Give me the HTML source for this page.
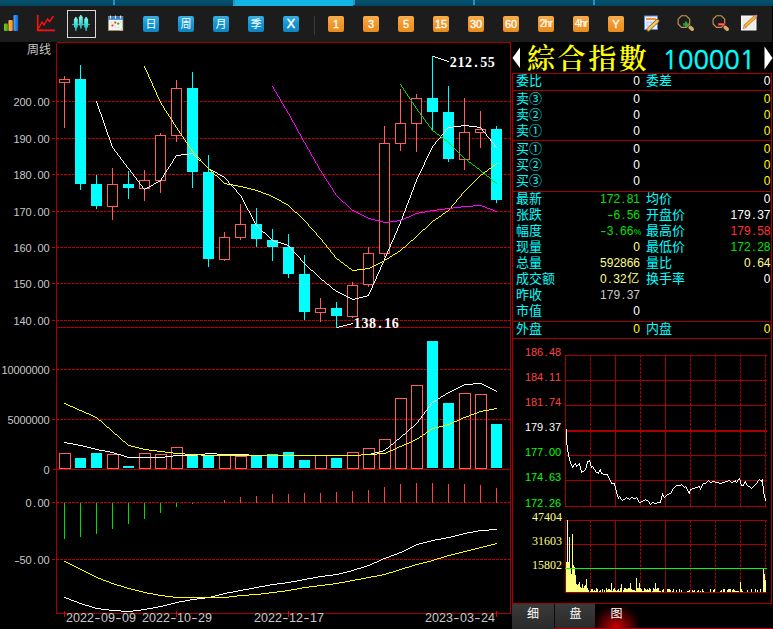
<!DOCTYPE html>
<html><head><meta charset="utf-8"><title>chart</title><style>
html,body{margin:0;padding:0;background:#000;}
#root{position:relative;width:773px;height:629px;overflow:hidden;background:#000;font-family:"Liberation Mono","Noto Sans CJK SC",monospace;}
.t{position:absolute;white-space:nowrap;line-height:14px;color:#fff;}
.t i{display:inline-block;font-style:normal;text-align:center;}
.ax{font-size:11px;color:#c8c8c8;font-family:"Liberation Sans",sans-serif;}
.num{font-size:11px;font-family:"Liberation Sans","Noto Sans CJK SC",sans-serif;}
.date{font-size:12.5px;color:#c8c8c8;font-family:"Liberation Sans",sans-serif;}
.cn{font-size:12px;font-family:"Liberation Sans","Noto Sans CJK SC",sans-serif;}
.cy{color:#00ffff;}
.pcn{font-size:13px;font-family:"Liberation Sans","Noto Sans CJK SC",sans-serif;}
.pn{font-size:12px;font-family:"Liberation Sans","Noto Sans CJK SC",sans-serif;}
.bold{font-family:"Liberation Serif",serif;font-weight:bold;font-size:14px;color:#fff;}
.ser{font-family:"Liberation Serif",serif;font-size:12px;color:#ffff80;}
.title{font-family:"Noto Serif CJK SC","Noto Serif CJK TC",serif;font-weight:600;font-size:28px;letter-spacing:2.6px;line-height:34px;color:#ffff00;}
.code{font-family:"NanumGothic","Liberation Sans",sans-serif;font-size:25.5px;-webkit-text-stroke:0.5px #00ffff;line-height:34px;color:#00ffff;}
#tb{position:absolute;left:0;top:0;width:772px;height:42px;background:#1c1c1c;}
#strip{position:absolute;left:0;top:0;width:773px;height:6px;background:linear-gradient(#06526f,#054560);}
#strip i{position:absolute;top:0;width:1.5px;height:5px;background:#2b8fc0;}
#strip b{position:absolute;top:0;left:233px;width:120px;height:5.5px;background:#11b5e6;}
.btn{position:absolute;top:16px;width:16px;height:16px;border-radius:2px;color:#fff;font:bold 11px/16px "Liberation Sans","Noto Sans CJK SC",sans-serif;text-align:center;overflow:hidden;}
.bl{font-weight:normal;font-size:11px;}
.bx{font-weight:normal;font-size:12.5px;-webkit-text-stroke:0.45px #fff;}
.bl{background:linear-gradient(#38aee2,#1496d2 50%,#0d84c2);}
.or{font-weight:normal;-webkit-text-stroke:0.3px #fff;background:linear-gradient(#f7ad4c,#f0962a 55%,#e88c1c);}
.sm{font-size:10px;letter-spacing:-0.6px;-webkit-text-stroke:0.2px #fff;}
#tabs{position:absolute;left:513px;top:604px;width:260px;height:25px;background:#000;}
#tabs div{position:absolute;top:0;height:25px;color:#fff;font:12px/21px "Liberation Sans","Noto Sans CJK SC",sans-serif;text-align:center;}
</style></head>
<body><div id="root">
<svg width="773" height="629" viewBox="0 0 773 629" style="position:absolute;left:0;top:0">
<g shape-rendering="crispEdges">
<line x1="56.5" y1="42.5" x2="56.5" y2="613.5" stroke="#a80000" stroke-width="1"/>
<line x1="510.5" y1="42.5" x2="510.5" y2="613.5" stroke="#a80000" stroke-width="1"/>
<line x1="56.5" y1="42.5" x2="510.5" y2="42.5" stroke="#a80000" stroke-width="1"/>
<line x1="56.5" y1="613.5" x2="510.5" y2="613.5" stroke="#a80000" stroke-width="1"/>
<line x1="56.5" y1="327.5" x2="510.5" y2="327.5" stroke="#a80000" stroke-width="1"/>
<line x1="53" y1="469.5" x2="510.5" y2="469.5" stroke="#a80000" stroke-width="1"/>
<line x1="52" y1="101.5" x2="510.5" y2="101.5" stroke="#c00000" stroke-width="1" stroke-dasharray="3 1"/>
<line x1="52" y1="138.5" x2="510.5" y2="138.5" stroke="#c00000" stroke-width="1" stroke-dasharray="3 1"/>
<line x1="52" y1="174.5" x2="510.5" y2="174.5" stroke="#c00000" stroke-width="1" stroke-dasharray="3 1"/>
<line x1="52" y1="211.5" x2="510.5" y2="211.5" stroke="#c00000" stroke-width="1" stroke-dasharray="3 1"/>
<line x1="52" y1="247.5" x2="510.5" y2="247.5" stroke="#c00000" stroke-width="1" stroke-dasharray="3 1"/>
<line x1="52" y1="283.5" x2="510.5" y2="283.5" stroke="#c00000" stroke-width="1" stroke-dasharray="3 1"/>
<line x1="52" y1="320.5" x2="510.5" y2="320.5" stroke="#c00000" stroke-width="1" stroke-dasharray="3 1"/>
<line x1="52" y1="369.5" x2="510.5" y2="369.5" stroke="#c00000" stroke-width="1" stroke-dasharray="3 1"/>
<line x1="52" y1="419.5" x2="510.5" y2="419.5" stroke="#c00000" stroke-width="1" stroke-dasharray="3 1"/>
<line x1="52" y1="502.5" x2="510.5" y2="502.5" stroke="#c00000" stroke-width="1" stroke-dasharray="3 1"/>
<line x1="52" y1="559.5" x2="510.5" y2="559.5" stroke="#c00000" stroke-width="1" stroke-dasharray="3 1"/>
<line x1="64.5" y1="611" x2="64.5" y2="617" stroke="#e00000" stroke-width="1"/>
<line x1="176.5" y1="611" x2="176.5" y2="617" stroke="#e00000" stroke-width="1"/>
<line x1="288.5" y1="611" x2="288.5" y2="617" stroke="#e00000" stroke-width="1"/>
<line x1="496.5" y1="611" x2="496.5" y2="617" stroke="#e00000" stroke-width="1"/>
<line x1="64.5" y1="76" x2="64.5" y2="79" stroke="#ff5c5c" stroke-width="1"/>
<line x1="64.5" y1="82" x2="64.5" y2="128" stroke="#ff5c5c" stroke-width="1"/>
<rect x="59.5" y="79.5" width="10" height="3" fill="#000" stroke="#ff5c5c"/>
<line x1="80.5" y1="65" x2="80.5" y2="190" stroke="#00ffff" stroke-width="1"/>
<rect x="75" y="79" width="11" height="105" fill="#00ffff"/>
<line x1="96.5" y1="175" x2="96.5" y2="209" stroke="#00ffff" stroke-width="1"/>
<rect x="91" y="184" width="11" height="22" fill="#00ffff"/>
<line x1="112.5" y1="168" x2="112.5" y2="184" stroke="#ff5c5c" stroke-width="1"/>
<line x1="112.5" y1="206" x2="112.5" y2="220" stroke="#ff5c5c" stroke-width="1"/>
<rect x="107.5" y="184.5" width="10" height="22" fill="#000" stroke="#ff5c5c"/>
<line x1="128.5" y1="171" x2="128.5" y2="199" stroke="#00ffff" stroke-width="1"/>
<rect x="123" y="184" width="11" height="4" fill="#00ffff"/>
<line x1="144.5" y1="170" x2="144.5" y2="180" stroke="#ff5c5c" stroke-width="1"/>
<line x1="144.5" y1="188" x2="144.5" y2="201" stroke="#ff5c5c" stroke-width="1"/>
<rect x="139.5" y="180.5" width="10" height="8" fill="#000" stroke="#ff5c5c"/>
<line x1="160.5" y1="133" x2="160.5" y2="135" stroke="#ff5c5c" stroke-width="1"/>
<line x1="160.5" y1="180" x2="160.5" y2="193" stroke="#ff5c5c" stroke-width="1"/>
<rect x="155.5" y="135.5" width="10" height="45" fill="#000" stroke="#ff5c5c"/>
<line x1="176.5" y1="80" x2="176.5" y2="88" stroke="#ff5c5c" stroke-width="1"/>
<line x1="176.5" y1="135" x2="176.5" y2="142" stroke="#ff5c5c" stroke-width="1"/>
<rect x="171.5" y="88.5" width="10" height="47" fill="#000" stroke="#ff5c5c"/>
<line x1="192.5" y1="72" x2="192.5" y2="188" stroke="#00ffff" stroke-width="1"/>
<rect x="187" y="88" width="11" height="84" fill="#00ffff"/>
<line x1="208.5" y1="155" x2="208.5" y2="267" stroke="#00ffff" stroke-width="1"/>
<rect x="203" y="172" width="11" height="87" fill="#00ffff"/>
<line x1="224.5" y1="232" x2="224.5" y2="237" stroke="#ff5c5c" stroke-width="1"/>
<line x1="224.5" y1="259" x2="224.5" y2="261" stroke="#ff5c5c" stroke-width="1"/>
<rect x="219.5" y="237.5" width="10" height="22" fill="#000" stroke="#ff5c5c"/>
<line x1="240.5" y1="204" x2="240.5" y2="224" stroke="#ff5c5c" stroke-width="1"/>
<line x1="240.5" y1="237" x2="240.5" y2="240" stroke="#ff5c5c" stroke-width="1"/>
<rect x="235.5" y="224.5" width="10" height="13" fill="#000" stroke="#ff5c5c"/>
<line x1="256.5" y1="208" x2="256.5" y2="247" stroke="#00ffff" stroke-width="1"/>
<rect x="251" y="224" width="11" height="15" fill="#00ffff"/>
<line x1="272.5" y1="229" x2="272.5" y2="261" stroke="#00ffff" stroke-width="1"/>
<rect x="267" y="240" width="11" height="7" fill="#00ffff"/>
<line x1="288.5" y1="234" x2="288.5" y2="278" stroke="#00ffff" stroke-width="1"/>
<rect x="283" y="247" width="11" height="27" fill="#00ffff"/>
<line x1="304.5" y1="255" x2="304.5" y2="320" stroke="#00ffff" stroke-width="1"/>
<rect x="299" y="274" width="11" height="38" fill="#00ffff"/>
<line x1="320.5" y1="298" x2="320.5" y2="308" stroke="#ff5c5c" stroke-width="1"/>
<line x1="320.5" y1="312" x2="320.5" y2="322" stroke="#ff5c5c" stroke-width="1"/>
<rect x="315.5" y="308.5" width="10" height="4" fill="#000" stroke="#ff5c5c"/>
<line x1="336.5" y1="302" x2="336.5" y2="328" stroke="#00ffff" stroke-width="1"/>
<rect x="331" y="308" width="11" height="8" fill="#00ffff"/>
<line x1="352.5" y1="282" x2="352.5" y2="285" stroke="#ff5c5c" stroke-width="1"/>
<line x1="352.5" y1="316" x2="352.5" y2="318" stroke="#ff5c5c" stroke-width="1"/>
<rect x="347.5" y="285.5" width="10" height="31" fill="#000" stroke="#ff5c5c"/>
<line x1="368.5" y1="247" x2="368.5" y2="253" stroke="#ff5c5c" stroke-width="1"/>
<line x1="368.5" y1="284" x2="368.5" y2="287" stroke="#ff5c5c" stroke-width="1"/>
<rect x="363.5" y="253.5" width="10" height="31" fill="#000" stroke="#ff5c5c"/>
<line x1="384.5" y1="126" x2="384.5" y2="143" stroke="#ff5c5c" stroke-width="1"/>
<line x1="384.5" y1="253" x2="384.5" y2="257" stroke="#ff5c5c" stroke-width="1"/>
<rect x="379.5" y="143.5" width="10" height="110" fill="#000" stroke="#ff5c5c"/>
<line x1="400.5" y1="89" x2="400.5" y2="123" stroke="#ff5c5c" stroke-width="1"/>
<line x1="400.5" y1="143" x2="400.5" y2="151" stroke="#ff5c5c" stroke-width="1"/>
<rect x="395.5" y="123.5" width="10" height="20" fill="#000" stroke="#ff5c5c"/>
<line x1="416.5" y1="94" x2="416.5" y2="98" stroke="#ff5c5c" stroke-width="1"/>
<line x1="416.5" y1="123" x2="416.5" y2="152" stroke="#ff5c5c" stroke-width="1"/>
<rect x="411.5" y="98.5" width="10" height="25" fill="#000" stroke="#ff5c5c"/>
<line x1="432.5" y1="56" x2="432.5" y2="131" stroke="#00ffff" stroke-width="1"/>
<rect x="427" y="98" width="11" height="14" fill="#00ffff"/>
<line x1="448.5" y1="86" x2="448.5" y2="162" stroke="#00ffff" stroke-width="1"/>
<rect x="443" y="112" width="11" height="47" fill="#00ffff"/>
<line x1="464.5" y1="98" x2="464.5" y2="132" stroke="#ff5c5c" stroke-width="1"/>
<line x1="464.5" y1="159" x2="464.5" y2="170" stroke="#ff5c5c" stroke-width="1"/>
<rect x="459.5" y="132.5" width="10" height="27" fill="#000" stroke="#ff5c5c"/>
<line x1="480.5" y1="111" x2="480.5" y2="129" stroke="#ff5c5c" stroke-width="1"/>
<line x1="480.5" y1="132" x2="480.5" y2="148" stroke="#ff5c5c" stroke-width="1"/>
<rect x="475.5" y="129.5" width="10" height="3" fill="#000" stroke="#ff5c5c"/>
<line x1="496.5" y1="126" x2="496.5" y2="203" stroke="#00ffff" stroke-width="1"/>
<rect x="491" y="129" width="11" height="71" fill="#00ffff"/>
<rect x="59.5" y="453.5" width="11" height="15" fill="none" stroke="#ff5c5c"/>
<rect x="75" y="458" width="11" height="10" fill="#00ffff"/>
<rect x="91" y="453" width="11" height="15" fill="#00ffff"/>
<rect x="107.5" y="454.5" width="11" height="14" fill="none" stroke="#ff5c5c"/>
<rect x="123" y="466" width="11" height="2" fill="#00ffff"/>
<rect x="139.5" y="453.5" width="11" height="15" fill="none" stroke="#ff5c5c"/>
<rect x="155.5" y="454.5" width="11" height="14" fill="none" stroke="#ff5c5c"/>
<rect x="171.5" y="447.5" width="11" height="21" fill="none" stroke="#ff5c5c"/>
<rect x="187" y="454" width="11" height="14" fill="#00ffff"/>
<rect x="203" y="455" width="11" height="13" fill="#00ffff"/>
<rect x="219.5" y="455.5" width="11" height="13" fill="none" stroke="#ff5c5c"/>
<rect x="235.5" y="456.5" width="11" height="12" fill="none" stroke="#ff5c5c"/>
<rect x="251" y="456" width="11" height="12" fill="#00ffff"/>
<rect x="267" y="454" width="11" height="14" fill="#00ffff"/>
<rect x="283" y="452" width="11" height="16" fill="#00ffff"/>
<rect x="299" y="460" width="11" height="8" fill="#00ffff"/>
<rect x="315.5" y="455.5" width="11" height="13" fill="none" stroke="#ff5c5c"/>
<rect x="331" y="458" width="11" height="10" fill="#00ffff"/>
<rect x="347.5" y="452.5" width="11" height="16" fill="none" stroke="#ff5c5c"/>
<rect x="363.5" y="448.5" width="11" height="20" fill="none" stroke="#ff5c5c"/>
<rect x="379.5" y="439.5" width="11" height="29" fill="none" stroke="#ff5c5c"/>
<rect x="395.5" y="398.5" width="11" height="70" fill="none" stroke="#ff5c5c"/>
<rect x="411.5" y="385.5" width="11" height="83" fill="none" stroke="#ff5c5c"/>
<rect x="427" y="341" width="11" height="127" fill="#00ffff"/>
<rect x="443" y="403" width="11" height="65" fill="#00ffff"/>
<rect x="459.5" y="393.5" width="11" height="75" fill="none" stroke="#ff5c5c"/>
<rect x="475.5" y="394.5" width="11" height="74" fill="none" stroke="#ff5c5c"/>
<rect x="491" y="424" width="11" height="44" fill="#00ffff"/>
<line x1="64.5" y1="502.5" x2="64.5" y2="539" stroke="#00e000" stroke-width="1"/>
<line x1="80.5" y1="502.5" x2="80.5" y2="537" stroke="#00e000" stroke-width="1"/>
<line x1="96.5" y1="502.5" x2="96.5" y2="534" stroke="#00e000" stroke-width="1"/>
<line x1="112.5" y1="502.5" x2="112.5" y2="529" stroke="#00e000" stroke-width="1"/>
<line x1="128.5" y1="502.5" x2="128.5" y2="524" stroke="#00e000" stroke-width="1"/>
<line x1="144.5" y1="502.5" x2="144.5" y2="519" stroke="#00e000" stroke-width="1"/>
<line x1="160.5" y1="502.5" x2="160.5" y2="512.75" stroke="#00e000" stroke-width="1"/>
<line x1="176.5" y1="502.5" x2="176.5" y2="507" stroke="#00e000" stroke-width="1"/>
<line x1="192.5" y1="502.5" x2="192.5" y2="503.75" stroke="#00e000" stroke-width="1"/>
<line x1="224.5" y1="502.5" x2="224.5" y2="500.25" stroke="#ff4040" stroke-width="1"/>
<line x1="240.5" y1="502.5" x2="240.5" y2="497" stroke="#ff4040" stroke-width="1"/>
<line x1="256.5" y1="502.5" x2="256.5" y2="496" stroke="#ff4040" stroke-width="1"/>
<line x1="272.5" y1="502.5" x2="272.5" y2="494" stroke="#ff4040" stroke-width="1"/>
<line x1="288.5" y1="502.5" x2="288.5" y2="494" stroke="#ff4040" stroke-width="1"/>
<line x1="304.5" y1="502.5" x2="304.5" y2="493" stroke="#ff4040" stroke-width="1"/>
<line x1="320.5" y1="502.5" x2="320.5" y2="493" stroke="#ff4040" stroke-width="1"/>
<line x1="336.5" y1="502.5" x2="336.5" y2="492" stroke="#ff4040" stroke-width="1"/>
<line x1="352.5" y1="502.5" x2="352.5" y2="490.75" stroke="#ff4040" stroke-width="1"/>
<line x1="368.5" y1="502.5" x2="368.5" y2="490" stroke="#ff4040" stroke-width="1"/>
<line x1="384.5" y1="502.5" x2="384.5" y2="487" stroke="#ff4040" stroke-width="1"/>
<line x1="400.5" y1="502.5" x2="400.5" y2="483.75" stroke="#ff4040" stroke-width="1"/>
<line x1="416.5" y1="502.5" x2="416.5" y2="482.75" stroke="#ff4040" stroke-width="1"/>
<line x1="432.5" y1="502.5" x2="432.5" y2="482.75" stroke="#ff4040" stroke-width="1"/>
<line x1="448.5" y1="502.5" x2="448.5" y2="483.75" stroke="#ff4040" stroke-width="1"/>
<line x1="464.5" y1="502.5" x2="464.5" y2="483.75" stroke="#ff4040" stroke-width="1"/>
<line x1="480.5" y1="502.5" x2="480.5" y2="485" stroke="#ff4040" stroke-width="1"/>
<line x1="496.5" y1="502.5" x2="496.5" y2="487.75" stroke="#ff4040" stroke-width="1"/>
</g>
<path d="M453 126.5h8M469 126.5h8M145 188.5h2M176 155.5h5M277 242.5h4M209 169.5h2M181 154.5h8M218 174.5h2M211 170.5h2M344 295.5h2M367 295.5h2M348 297.5h2M359 297.5h4M448 127.5h5M477 127.5h4M333 289.5h2M274 241.5h3M158 181.5h2M322 280.5h2M340 293.5h2M311 270.5h2M281 243.5h3M147 187.5h2M284 244.5h3M336 291.5h2M213 171.5h2M461 125.5h8M199 160.5h2M189 153.5h4M215 172.5h2M149 186.5h2M287 245.5h2M154 183.5h2M272 240.5h2M156 182.5h2M350 298.5h2M355 298.5h4M151 185.5h2M327 284.5h2M346 296.5h2M363 296.5h4M220 175.5h2M352 299.5h3M338 292.5h2M342 294.5h2M222 176.5h2M263 232.5h2M105.5 126v3M140.5 184v1M153.5 184v1M230.5 184v1M414.5 184v3M143.5 188v1M234.5 188v1M413.5 187v3M118.5 155v1M194.5 155v1M428.5 154v2M330.5 286v1M372.5 285v3M391.5 242v2M270.5 238v1M393.5 238v2M99.5 109v3M301.5 260v1M384.5 258v3M129.5 169v1M167.5 169v1M421.5 169v2M117.5 153v2M193.5 154v1M133.5 174v2M164.5 173v2M419.5 173v2M130.5 170v2M166.5 170v2M271.5 239v1M254.5 221v2M400.5 221v3M304.5 263v1M382.5 263v2M110.5 140v3M436.5 141v1M491.5 141v1M245.5 204v2M407.5 203v2M371.5 288v2M103.5 120v3M308.5 267v1M380.5 267v3M392.5 240v2M138.5 181v1M228.5 181v2M416.5 179v3M241.5 196v2M410.5 195v3M289.5 246v1M390.5 244v3M375.5 279v2M369.5 292v2M125.5 164v1M170.5 164v2M204.5 164v1M424.5 162v3M379.5 270v2M236.5 190v2M412.5 190v2M142.5 186v2M233.5 187v1M296.5 254v1M386.5 254v2M136.5 178v2M161.5 178v2M226.5 179v1M297.5 255v1M370.5 290v2M437.5 140v1M490.5 139v2M108.5 135v2M440.5 136v2M487.5 136v1M420.5 171v2M116.5 152v1M429.5 152v2M106.5 129v3M446.5 129v1M482.5 129v2M251.5 215v2M403.5 213v3M259.5 228v1M397.5 228v3M300.5 258v2M104.5 123v3M122.5 160v1M173.5 159v2M425.5 160v2M131.5 172v1M165.5 172v1M120.5 157v2M174.5 158v1M197.5 158v1M426.5 158v2M112.5 146v2M432.5 146v2M495.5 146v1M435.5 142v2M492.5 142v1M315.5 273v1M378.5 272v2M441.5 135v1M486.5 134v2M293.5 251v1M387.5 251v3M232.5 186v1M244.5 202v2M408.5 200v3M256.5 225v1M399.5 224v2M102.5 117v3M250.5 213v2M139.5 182v2M229.5 183v1M415.5 182v2M332.5 288v1M303.5 262v1M383.5 261v2M127.5 167v1M168.5 167v2M207.5 167v1M422.5 167v2M111.5 143v3M493.5 143v1M107.5 132v3M443.5 133v1M485.5 133v1M114.5 149v2M431.5 148v2M137.5 180v1M160.5 180v1M227.5 180v1M175.5 156v2M196.5 157v1M427.5 156v2M239.5 194v1M411.5 192v3M119.5 156v1M195.5 156v1M109.5 137v3M438.5 139v1M240.5 195v1M243.5 200v2M101.5 114v3M314.5 272v1M255.5 223v2M121.5 159v1M198.5 159v1M265.5 233v1M395.5 233v2M447.5 128v1M481.5 128v1M266.5 234v1M113.5 148v1M98.5 106v3M126.5 165v2M169.5 166v1M206.5 166v1M423.5 165v2M258.5 227v1M398.5 226v2M123.5 161v2M172.5 161v2M202.5 162v1M238.5 193v1M317.5 275v1M377.5 274v2M306.5 265v1M381.5 265v2M298.5 256v1M385.5 256v2M135.5 177v1M162.5 177v1M224.5 177v1M417.5 177v2M141.5 185v1M231.5 185v1M496.5 147v1M225.5 178v1M144.5 189v1M235.5 189v1M335.5 290v1M97.5 103v3M373.5 283v2M305.5 264v1M444.5 132v1M484.5 132v1M299.5 257v1M261.5 230v1M257.5 226v1M237.5 192v1M163.5 175v2M418.5 175v2M115.5 151v1M430.5 150v2M439.5 138v1M489.5 138v1M442.5 134v1M434.5 144v1M494.5 144v2M291.5 248v1M389.5 247v2M246.5 206v2M406.5 205v3M324.5 281v1M374.5 281v2M132.5 173v1M217.5 173v1M316.5 274v1M201.5 161v1M242.5 198v2M409.5 198v2M320.5 278v1M376.5 276v3M290.5 247v1M445.5 130v2M368.5 294v1M128.5 168v1M208.5 168v1M307.5 266v1M329.5 285v1M260.5 229v1M268.5 236v1M394.5 235v3M253.5 219v2M401.5 219v2M248.5 210v1M405.5 208v3M319.5 277v1M134.5 176v1M100.5 112v2M267.5 235v1M96.5 101v2M396.5 231v2M302.5 261v1M433.5 145v1M318.5 276v1M292.5 249v2M388.5 249v2M124.5 163v1M171.5 163v1M203.5 163v1M252.5 217v2M402.5 216v3M249.5 211v2M404.5 211v2M310.5 269v1M262.5 231v1M483.5 131v1M321.5 279v1M295.5 253v1M488.5 137v1M325.5 282v1M205.5 165v1M313.5 271v1M269.5 237v1M294.5 252v1M247.5 208v2M331.5 287v1M309.5 268v1M326.5 283v1" fill="none" stroke="#ffffff" stroke-width="1" shape-rendering="crispEdges"/>
<path d="M227 184.5h6M481 174.5h2M357 269.5h8M433 220.5h2M238 186.5h5M251 189.5h4M233 185.5h5M286 204.5h2M255 190.5h3M341 262.5h2M380 262.5h2M411 240.5h2M352 270.5h5M269 195.5h2M282 202.5h2M485 171.5h2M376 264.5h2M398 251.5h2M390 256.5h2M215 175.5h2M337 259.5h2M385 259.5h2M446 211.5h2M423 229.5h2M263 193.5h3M349 268.5h2M365 268.5h5M489 168.5h2M258 191.5h3M273 197.5h2M295 212.5h2M378 263.5h2M266 194.5h3M443 213.5h2M370 267.5h2M277 199.5h2M271 196.5h2M243 187.5h4M224 183.5h3M279 200.5h2M345 265.5h2M374 265.5h2M403 247.5h2M436 218.5h2M372 266.5h2M247 188.5h4M395 253.5h2M261 192.5h2M275 198.5h2M493 165.5h2M382 261.5h2M439 216.5h2M387 258.5h2M393 254.5h2M284 203.5h2M189.5 146v2M471.5 184v1M334.5 255v2M392.5 255v1M290.5 207v1M451.5 206v2M339.5 260v1M384.5 260v1M214.5 174v1M351.5 269v1M304.5 220v1M149.5 77v2M469.5 186v1M301.5 217v1M438.5 217v1M150.5 79v2M163.5 106v2M219.5 178v1M477.5 178v1M466.5 189v1M298.5 214v1M442.5 214v1M470.5 185v1M453.5 204v1M175.5 125v2M156.5 92v3M193.5 152v1M465.5 190v1M319.5 237v1M415.5 237v1M157.5 95v2M322.5 240v2M320.5 238v1M414.5 238v1M461.5 194v2M455.5 202v1M200.5 159v2M211.5 171v1M326.5 245v2M406.5 245v1M344.5 264v1M330.5 250v2M480.5 175v1M328.5 248v1M402.5 248v1M167.5 113v1M170.5 117v2M207.5 167v1M491.5 167v1M294.5 211v1M312.5 229v1M171.5 119v1M462.5 193v1M192.5 151v1M316.5 233v2M418.5 234v1M208.5 168v1M464.5 191v1M199.5 158v1M311.5 228v1M425.5 228v1M323.5 242v1M409.5 242v1M459.5 197v1M293.5 210v1M448.5 210v1M173.5 122v2M210.5 170v1M487.5 170v1M445.5 212v1M343.5 263v1M220.5 179v1M476.5 179v1M166.5 111v2M174.5 124v1M297.5 213v1M177.5 128v2M348.5 267v1M159.5 99v2M457.5 199v1M191.5 149v2M303.5 219v1M435.5 219v1M460.5 196v1M308.5 224v2M429.5 224v1M168.5 114v2M468.5 187v1M472.5 183v1M329.5 249v1M401.5 249v1M321.5 239v1M413.5 239v1M148.5 74v3M400.5 250v1M456.5 200v2M204.5 164v1M495.5 164v1M181.5 134v2M145.5 68v2M158.5 97v2M327.5 247v1M410.5 241v1M292.5 209v1M449.5 209v1M302.5 218v1M202.5 162v1M315.5 232v1M420.5 232v1M347.5 266v1M467.5 188v1M147.5 72v2M317.5 235v1M417.5 235v1M172.5 120v2M221.5 180v1M475.5 180v1M314.5 231v1M421.5 231v1M289.5 206v1M144.5 66v2M194.5 153v1M155.5 90v2M218.5 177v1M478.5 177v1M195.5 154v1M331.5 252v1M397.5 252v1M201.5 161v1M332.5 253v1M306.5 222v1M431.5 222v1M176.5 127v1M179.5 131v2M299.5 215v1M441.5 215v1M180.5 133v1M209.5 169v1M488.5 169v1M154.5 88v2M324.5 243v1M408.5 243v1M335.5 257v1M389.5 257v1M291.5 208v1M450.5 208v1M463.5 192v1M313.5 230v1M422.5 230v1M223.5 182v1M473.5 182v1M146.5 70v2M183.5 137v2M458.5 198v1M205.5 165v1M153.5 86v2M305.5 221v1M432.5 221v1M419.5 233v1M340.5 261v1M178.5 130v1M182.5 136v1M300.5 216v1M222.5 181v1M474.5 181v1M310.5 227v1M426.5 227v1M197.5 156v1M203.5 163v1M496.5 163v1M336.5 258v1M164.5 108v2M185.5 140v2M186.5 142v1M152.5 83v3M196.5 155v1M428.5 225v1M333.5 254v1M212.5 172v1M484.5 172v1M206.5 166v1M492.5 166v1M405.5 246v1M288.5 205v1M452.5 205v1M307.5 223v1M430.5 223v1M184.5 139v1M281.5 201v1M151.5 81v2M454.5 203v1M217.5 176v1M479.5 176v1M187.5 143v2M188.5 145v1M325.5 244v1M407.5 244v1M198.5 157v1M318.5 236v1M416.5 236v1M161.5 103v2M213.5 173v1M483.5 173v1M162.5 105v1M165.5 110v1M160.5 101v2M169.5 116v1M190.5 148v1M309.5 226v1M427.5 226v1" fill="none" stroke="#ffff00" stroke-width="1" shape-rendering="crispEdges"/>
<path d="M437 209.5h8M490 209.5h3M371 219.5h4M402 219.5h2M383 222.5h6M366 217.5h2M406 217.5h3M356 212.5h2M419 212.5h6M453 207.5h8M485 207.5h2M368 218.5h3M404 218.5h2M354 211.5h2M425 211.5h5M495 211.5h2M364 216.5h2M409 216.5h2M375 220.5h4M397 220.5h5M461 206.5h12M482 206.5h3M358 213.5h2M415 213.5h4M445 208.5h8M487 208.5h3M473 205.5h9M360 214.5h2M413 214.5h2M352 210.5h2M430 210.5h7M493 210.5h2M379 221.5h4M389 221.5h8M343 202.5h2M362 215.5h2M411 215.5h2M351.5 209v1M289.5 114v2M277.5 94v2M304.5 142v1M349.5 207v1M307.5 147v2M335.5 193v2M274.5 89v2M309.5 150v2M297.5 129v2M300.5 134v2M348.5 206v1M350.5 208v1M347.5 205v1M305.5 143v2M319.5 168v2M342.5 201v1M294.5 123v2M320.5 170v1M287.5 111v2M325.5 178v1M313.5 157v2M280.5 99v2M302.5 138v2M291.5 118v2M318.5 166v2M329.5 184v1M288.5 113v1M284.5 106v2M310.5 152v2M298.5 131v2M273.5 87v2M326.5 179v2M334.5 192v1M303.5 140v2M296.5 127v2M301.5 136v2M345.5 203v1M315.5 161v2M323.5 174v2M311.5 154v2M290.5 116v2M314.5 159v2M293.5 122v1M281.5 101v2M328.5 182v2M316.5 163v1M283.5 104v2M327.5 181v1M286.5 109v2M321.5 171v2M276.5 92v2M324.5 176v2M312.5 156v1M332.5 188v2M279.5 97v2M317.5 164v2M272.5 86v1M306.5 145v2M330.5 185v2M333.5 190v2M299.5 133v1M292.5 120v2M295.5 125v2M346.5 204v1M339.5 198v1M285.5 108v1M282.5 103v1M278.5 96v1M308.5 149v1M275.5 91v1M331.5 187v1M340.5 199v1M336.5 195v1M341.5 200v1M337.5 196v1M338.5 197v1M322.5 173v1" fill="none" stroke="#ff00ff" stroke-width="1" shape-rendering="crispEdges"/>
<path d="M441 137.5h2M437 134.5h2M465 159.5h2M473 165.5h2M469 162.5h2M433 131.5h2M477 168.5h2M445 140.5h2M482 172.5h2M487 176.5h2M493 181.5h2M413.5 103v2M422.5 116v1M484.5 173v1M459.5 153v1M409.5 97v2M455.5 149v1M417.5 109v2M426.5 122v1M443.5 138v1M427.5 123v1M401.5 85v2M414.5 105v1M444.5 139v1M485.5 174v1M431.5 128v2M406.5 93v1M462.5 156v1M411.5 100v2M420.5 113v2M463.5 157v1M423.5 117v2M407.5 94v2M415.5 106v2M424.5 119v1M481.5 171v1M412.5 102v1M495.5 182v1M464.5 158v1M440.5 136v1M460.5 154v1M496.5 183v1M416.5 108v1M471.5 163v1M418.5 111v1M400.5 84v1M472.5 164v1M448.5 142v1M405.5 91v2M479.5 169v1M490.5 178v1M432.5 130v1M449.5 143v1M410.5 99v1M480.5 170v1M492.5 180v1M425.5 120v2M428.5 124v2M403.5 88v2M452.5 146v1M429.5 126v1M447.5 141v1M475.5 166v1M453.5 147v1M404.5 90v1M421.5 115v1M435.5 132v1M430.5 127v1M491.5 179v1M436.5 133v1M454.5 148v1M439.5 135v1M450.5 144v1M467.5 160v1M456.5 150v1M451.5 145v1M468.5 161v1M486.5 175v1M461.5 155v1M402.5 87v1M489.5 177v1M457.5 151v1M419.5 112v1M458.5 152v1M476.5 167v1M408.5 96v1" fill="none" stroke="#00e000" stroke-width="1" shape-rendering="crispEdges"/>
<path d="M114 453.5h3M205 453.5h12M371 453.5h4M121 455.5h3M173 455.5h24M249 455.5h112M117 454.5h4M197 454.5h8M217 454.5h32M361 454.5h10M124 456.5h3M165 456.5h8M95 449.5h4M105 451.5h5M379 451.5h4M443 395.5h2M78 445.5h5M127 457.5h38M435 400.5h2M448 392.5h2M110 452.5h4M375 452.5h4M83 446.5h4M403 434.5h2M473 383.5h9M67 443.5h6M99 450.5h6M383 450.5h2M464 384.5h9M482 384.5h2M462 385.5h2M484 385.5h2M460 386.5h2M486 386.5h2M458 387.5h2M488 387.5h2M64 442.5h3M441 396.5h2M454 389.5h2M492 389.5h2M411 427.5h2M87 447.5h4M73 444.5h5M391 444.5h2M446 393.5h2M438 398.5h2M91 448.5h4M386 448.5h2M450 391.5h2M456 388.5h2M490 388.5h2M452 390.5h2M494 390.5h2M397 439.5h2M433 401.5h2M418.5 420v2M421.5 416v2M385.5 449v1M390.5 445v1M413.5 426v1M440.5 397v1M429.5 406v1M389.5 446v1M424.5 412v2M393.5 443v1M432.5 402v1M420.5 418v1M423.5 414v1M394.5 442v1M415.5 424v1M408.5 430v1M395.5 441v1M388.5 447v1M496.5 391v1M431.5 403v1M399.5 438v1M426.5 410v1M410.5 428v1M417.5 422v1M445.5 394v1M414.5 425v1M422.5 415v1M437.5 399v1M401.5 436v1M405.5 433v1M425.5 411v1M428.5 407v1M416.5 423v1M419.5 419v1M407.5 431v1M427.5 408v2M396.5 440v1M400.5 437v1M430.5 404v2M402.5 435v1M409.5 429v1M406.5 432v1" fill="none" stroke="#ffffff" stroke-width="1" shape-rendering="crispEdges"/>
<path d="M430 429.5h2M75 408.5h2M494 408.5h3M201 455.5h160M409 442.5h2M447 424.5h3M157 451.5h8M388 451.5h2M185 454.5h16M361 454.5h16M165 452.5h8M386 452.5h2M79 410.5h3M483 410.5h6M139 448.5h4M395 448.5h2M70 406.5h3M173 453.5h12M377 453.5h9M107 427.5h2M435 427.5h4M93 416.5h2M466 416.5h3M77 409.5h2M489 409.5h5M86 413.5h3M474 413.5h3M432 428.5h3M89 414.5h2M471 414.5h3M404 444.5h2M115 434.5h2M423 434.5h2M82 411.5h2M479 411.5h4M143 449.5h6M393 449.5h2M454 421.5h3M149 450.5h8M390 450.5h3M95 417.5h2M463 417.5h3M415 439.5h2M131 446.5h4M399 446.5h3M91 415.5h2M469 415.5h2M443 425.5h4M406 443.5h3M450 423.5h2M128 445.5h3M402 445.5h2M420 436.5h2M123 441.5h2M411 441.5h2M461 418.5h2M84 412.5h2M477 412.5h2M413 440.5h2M135 447.5h4M397 447.5h2M99 420.5h2M457 420.5h2M439 426.5h4M73 407.5h2M417 438.5h2M66 404.5h2M452 422.5h2M68 405.5h2M64 403.5h2M459 419.5h2M427 431.5h2M110.5 429v1M125.5 442v1M104.5 424v1M109.5 428v1M127.5 444v1M101.5 421v1M121.5 439v1M105.5 425v1M126.5 443v1M103.5 423v1M118.5 436v1M97.5 418v1M122.5 440v1M111.5 430v1M429.5 430v1M106.5 426v1M120.5 438v1M117.5 435v1M422.5 435v1M102.5 422v1M113.5 432v1M426.5 432v1M98.5 419v1M112.5 431v1M119.5 437v1M419.5 437v1M114.5 433v1M425.5 433v1" fill="none" stroke="#ffff00" stroke-width="1" shape-rendering="crispEdges"/>
<path d="M419 543.5h4M74 601.5h3M179 601.5h6M391 555.5h3M121 611.5h12M467 532.5h6M66 598.5h3M197 598.5h8M77 602.5h2M175 602.5h4M233 591.5h5M254 587.5h5M427 541.5h4M109 610.5h12M133 610.5h8M215 595.5h4M397 553.5h2M71 600.5h3M185 600.5h5M291 581.5h6M455 535.5h4M85 605.5h4M163 605.5h4M95 608.5h6M147 608.5h6M243 589.5h6M325 575.5h8M82 604.5h3M167 604.5h4M381 559.5h2M435 539.5h6M277 583.5h8M416 544.5h3M354 569.5h3M318 576.5h7M377 561.5h2M270 584.5h7M441 538.5h5M79 603.5h3M171 603.5h4M227 592.5h6M386 557.5h3M101 609.5h8M141 609.5h6M92 607.5h3M153 607.5h5M249 588.5h5M423 542.5h4M361 567.5h3M343 572.5h4M285 582.5h6M478 530.5h11M367 565.5h3M431 540.5h4M404 550.5h2M64 597.5h2M205 597.5h6M412 546.5h2M223 593.5h4M408 548.5h2M489 529.5h8M302 579.5h5M313 577.5h5M463 533.5h4M211 596.5h4M265 585.5h5M339 573.5h4M307 578.5h6M383 558.5h3M259 586.5h6M219 594.5h4M399 552.5h3M451 536.5h4M238 590.5h5M351 570.5h3M89 606.5h3M158 606.5h5M473 531.5h5M389 556.5h2M357 568.5h4M446 537.5h5M394 554.5h3M459 534.5h4M364 566.5h3M410 547.5h2M297 580.5h5M374 562.5h3M406 549.5h2M333 574.5h6M69 599.5h2M190 599.5h7M347 571.5h4M402 551.5h2M372 563.5h2M379 560.5h2M370 564.5h2M414 545.5h2" fill="none" stroke="#ffffff" stroke-width="1" shape-rendering="crispEdges"/>
<path d="M111 583.5h3M333 583.5h6M86 572.5h2M389 572.5h4M153 594.5h5M249 594.5h12M101 579.5h2M355 579.5h6M66 562.5h2M423 562.5h4M173 597.5h56M124 587.5h3M302 587.5h7M165 596.5h8M229 596.5h8M467 550.5h4M143 592.5h4M269 592.5h8M158 595.5h7M237 595.5h12M98 578.5h3M361 578.5h5M131 589.5h4M291 589.5h6M491 544.5h4M121 586.5h3M309 586.5h8M92 575.5h2M377 575.5h5M109 582.5h2M339 582.5h6M114 584.5h3M325 584.5h8M135 590.5h4M285 590.5h6M455 553.5h4M431 560.5h3M72 565.5h2M412 565.5h3M117 585.5h4M317 585.5h8M127 588.5h4M297 588.5h5M68 563.5h2M419 563.5h4M479 547.5h4M139 591.5h4M277 591.5h8M82 570.5h2M396 570.5h3M64 561.5h2M427 561.5h4M147 593.5h6M261 593.5h8M78 568.5h2M402 568.5h3M103 580.5h3M350 580.5h5M475 548.5h4M437 558.5h4M463 551.5h4M444 556.5h3M80 569.5h2M399 569.5h3M487 545.5h4M106 581.5h3M345 581.5h5M96 577.5h2M366 577.5h5M451 554.5h4M434 559.5h3M495 543.5h2M74 566.5h2M409 566.5h3M88 573.5h2M386 573.5h3M94 576.5h2M371 576.5h6M483 546.5h4M84 571.5h2M393 571.5h3M459 552.5h4M471 549.5h4M90 574.5h2M382 574.5h4M76 567.5h2M405 567.5h4M447 555.5h4M70 564.5h2M415 564.5h4M441 557.5h3" fill="none" stroke="#ffff00" stroke-width="1" shape-rendering="crispEdges"/>
<path d="M447 61.5h2M438 58.5h3M441 59.5h3M435 57.5h3M444 60.5h3M433 56.5h2" fill="none" stroke="#fff" stroke-width="1" shape-rendering="crispEdges"/>
<path d="M343 325.5h4M339 326.5h4M351 323.5h2M347 324.5h4M337 327.5h2" fill="none" stroke="#fff" stroke-width="1" shape-rendering="crispEdges"/>
<g shape-rendering="crispEdges">
<line x1="512.5" y1="73" x2="512.5" y2="603.5" stroke="#a80000" stroke-width="1"/>
<line x1="771.5" y1="73" x2="771.5" y2="603.5" stroke="#a80000" stroke-width="1"/>
<line x1="512.5" y1="73.5" x2="771.5" y2="73.5" stroke="#a80000" stroke-width="1"/>
<line x1="512.5" y1="90.5" x2="771.5" y2="90.5" stroke="#a80000" stroke-width="1"/>
<line x1="512.5" y1="140.5" x2="771.5" y2="140.5" stroke="#a80000" stroke-width="1"/>
<line x1="512.5" y1="191.5" x2="771.5" y2="191.5" stroke="#a80000" stroke-width="1"/>
<line x1="512.5" y1="321.5" x2="771.5" y2="321.5" stroke="#a80000" stroke-width="1"/>
<line x1="512.5" y1="338.5" x2="771.5" y2="338.5" stroke="#a80000" stroke-width="1"/>
<line x1="512.5" y1="603.5" x2="771.5" y2="603.5" stroke="#a80000" stroke-width="1"/>
<line x1="565" y1="355.5" x2="767" y2="355.5" stroke="#a80000" stroke-width="1"/>
<line x1="565" y1="380.5" x2="767" y2="380.5" stroke="#a80000" stroke-width="1"/>
<line x1="565" y1="405.5" x2="767" y2="405.5" stroke="#a80000" stroke-width="1"/>
<line x1="565" y1="430.5" x2="767" y2="430.5" stroke="#a80000" stroke-width="2"/>
<line x1="565" y1="455.5" x2="767" y2="455.5" stroke="#a80000" stroke-width="1"/>
<line x1="565" y1="480.5" x2="767" y2="480.5" stroke="#a80000" stroke-width="1"/>
<line x1="565" y1="506.5" x2="767" y2="506.5" stroke="#a80000" stroke-width="1"/>
<line x1="565.5" y1="355" x2="565.5" y2="507" stroke="#a80000" stroke-width="1"/>
<line x1="565.5" y1="520" x2="565.5" y2="593" stroke="#a80000" stroke-width="1"/>
<line x1="590.5" y1="355" x2="590.5" y2="507" stroke="#a80000" stroke-width="1" stroke-dasharray="3 1"/>
<line x1="590.5" y1="520" x2="590.5" y2="593" stroke="#a80000" stroke-width="1" stroke-dasharray="3 1"/>
<line x1="615.5" y1="355" x2="615.5" y2="507" stroke="#a80000" stroke-width="1"/>
<line x1="615.5" y1="520" x2="615.5" y2="593" stroke="#a80000" stroke-width="1"/>
<line x1="640.5" y1="355" x2="640.5" y2="507" stroke="#a80000" stroke-width="1" stroke-dasharray="3 1"/>
<line x1="640.5" y1="520" x2="640.5" y2="593" stroke="#a80000" stroke-width="1" stroke-dasharray="3 1"/>
<line x1="665.5" y1="355" x2="665.5" y2="507" stroke="#a80000" stroke-width="1"/>
<line x1="665.5" y1="520" x2="665.5" y2="593" stroke="#a80000" stroke-width="1"/>
<line x1="690.5" y1="355" x2="690.5" y2="507" stroke="#a80000" stroke-width="1" stroke-dasharray="3 1"/>
<line x1="690.5" y1="520" x2="690.5" y2="593" stroke="#a80000" stroke-width="1" stroke-dasharray="3 1"/>
<line x1="715.5" y1="355" x2="715.5" y2="507" stroke="#a80000" stroke-width="1" stroke-dasharray="3 1"/>
<line x1="715.5" y1="520" x2="715.5" y2="593" stroke="#a80000" stroke-width="1" stroke-dasharray="3 1"/>
<line x1="740.5" y1="355" x2="740.5" y2="507" stroke="#a80000" stroke-width="1" stroke-dasharray="3 1"/>
<line x1="740.5" y1="520" x2="740.5" y2="593" stroke="#a80000" stroke-width="1" stroke-dasharray="3 1"/>
<line x1="765.5" y1="355" x2="765.5" y2="507" stroke="#a80000" stroke-width="1" stroke-dasharray="3 1"/>
<line x1="765.5" y1="520" x2="765.5" y2="593" stroke="#a80000" stroke-width="1" stroke-dasharray="3 1"/>
<line x1="565" y1="520.5" x2="767" y2="520.5" stroke="#a80000" stroke-width="1"/>
<line x1="565" y1="544.5" x2="767" y2="544.5" stroke="#a80000" stroke-width="1"/>
<line x1="565" y1="592.5" x2="767" y2="592.5" stroke="#a80000" stroke-width="1"/>
<rect x="566" y="562" width="1" height="30" fill="#ffff80"/>
<rect x="567" y="520" width="1" height="72" fill="#ffff80"/>
<rect x="568" y="562" width="1" height="30" fill="#ffff80"/>
<rect x="569" y="537" width="1" height="55" fill="#ffff80"/>
<rect x="570" y="568" width="1" height="24" fill="#ffff80"/>
<rect x="571" y="574" width="1" height="18" fill="#ffff80"/>
<rect x="572" y="534" width="1" height="58" fill="#ffff80"/>
<rect x="573" y="565" width="1" height="27" fill="#ffff80"/>
<rect x="574" y="567" width="1" height="25" fill="#ffff80"/>
<rect x="575" y="575" width="1" height="17" fill="#ffff80"/>
<rect x="576" y="584.0" width="1" height="8.0" fill="#ffff80"/>
<rect x="577" y="585.3" width="1" height="6.7" fill="#ffff80"/>
<rect x="578" y="583.6" width="1" height="8.4" fill="#ffff80"/>
<rect x="579" y="581.9" width="1" height="10.1" fill="#ffff80"/>
<rect x="580" y="587.2" width="1" height="4.8" fill="#ffff80"/>
<rect x="581" y="587.5" width="1" height="4.5" fill="#ffff80"/>
<rect x="582" y="583.8" width="1" height="8.2" fill="#ffff80"/>
<rect x="583" y="588.1" width="1" height="3.9" fill="#ffff80"/>
<rect x="584" y="586.4" width="1" height="5.6" fill="#ffff80"/>
<rect x="585" y="584.7" width="1" height="7.300000000000001" fill="#ffff80"/>
<rect x="586" y="579" width="1" height="13" fill="#ffff80"/>
<rect x="587" y="588" width="1" height="4" fill="#ffff80"/>
<rect x="588" y="590" width="1" height="2" fill="#ffff80"/>
<rect x="590" y="591" width="1" height="1" fill="#ffff80"/>
<rect x="591" y="589" width="1" height="3" fill="#ffff80"/>
<rect x="592" y="589" width="1" height="3" fill="#ffff80"/>
<rect x="593" y="591" width="1" height="1" fill="#ffff80"/>
<rect x="594" y="590" width="1" height="2" fill="#ffff80"/>
<rect x="595" y="591" width="1" height="1" fill="#ffff80"/>
<rect x="596" y="588" width="1" height="4" fill="#ffff80"/>
<rect x="597" y="589" width="1" height="3" fill="#ffff80"/>
<rect x="599" y="591" width="1" height="1" fill="#ffff80"/>
<rect x="600" y="590" width="1" height="2" fill="#ffff80"/>
<rect x="602" y="589" width="1" height="3" fill="#ffff80"/>
<rect x="604" y="590" width="1" height="2" fill="#ffff80"/>
<rect x="606" y="588" width="1" height="4" fill="#ffff80"/>
<rect x="607" y="590" width="1" height="2" fill="#ffff80"/>
<rect x="608" y="589" width="1" height="3" fill="#ffff80"/>
<rect x="609" y="589" width="1" height="3" fill="#ffff80"/>
<rect x="610" y="590" width="1" height="2" fill="#ffff80"/>
<rect x="611" y="583" width="1" height="9" fill="#ffff80"/>
<rect x="612" y="591" width="1" height="1" fill="#ffff80"/>
<rect x="613" y="589" width="1" height="3" fill="#ffff80"/>
<rect x="614" y="588" width="1" height="4" fill="#ffff80"/>
<rect x="615" y="590" width="1" height="2" fill="#ffff80"/>
<rect x="616" y="591" width="1" height="1" fill="#ffff80"/>
<rect x="617" y="590" width="1" height="2" fill="#ffff80"/>
<rect x="618" y="589" width="1" height="3" fill="#ffff80"/>
<rect x="619" y="591" width="1" height="1" fill="#ffff80"/>
<rect x="620" y="588" width="1" height="4" fill="#ffff80"/>
<rect x="621" y="584" width="1" height="8" fill="#ffff80"/>
<rect x="623" y="590" width="1" height="2" fill="#ffff80"/>
<rect x="624" y="588" width="1" height="4" fill="#ffff80"/>
<rect x="625" y="588" width="1" height="4" fill="#ffff80"/>
<rect x="626" y="589" width="1" height="3" fill="#ffff80"/>
<rect x="627" y="589" width="1" height="3" fill="#ffff80"/>
<rect x="628" y="588" width="1" height="4" fill="#ffff80"/>
<rect x="629" y="588" width="1" height="4" fill="#ffff80"/>
<rect x="630" y="583" width="1" height="9" fill="#ffff80"/>
<rect x="631" y="589" width="1" height="3" fill="#ffff80"/>
<rect x="632" y="590" width="1" height="2" fill="#ffff80"/>
<rect x="633" y="590" width="1" height="2" fill="#ffff80"/>
<rect x="634" y="590" width="1" height="2" fill="#ffff80"/>
<rect x="635" y="591" width="1" height="1" fill="#ffff80"/>
<rect x="636" y="578" width="1" height="14" fill="#ffff80"/>
<rect x="637" y="588" width="1" height="4" fill="#ffff80"/>
<rect x="638" y="588" width="1" height="4" fill="#ffff80"/>
<rect x="639" y="583" width="1" height="9" fill="#ffff80"/>
<rect x="640" y="588" width="1" height="4" fill="#ffff80"/>
<rect x="641" y="589" width="1" height="3" fill="#ffff80"/>
<rect x="642" y="591" width="1" height="1" fill="#ffff80"/>
<rect x="643" y="591" width="1" height="1" fill="#ffff80"/>
<rect x="644" y="588" width="1" height="4" fill="#ffff80"/>
<rect x="645" y="589" width="1" height="3" fill="#ffff80"/>
<rect x="646" y="590" width="1" height="2" fill="#ffff80"/>
<rect x="647" y="589" width="1" height="3" fill="#ffff80"/>
<rect x="648" y="590" width="1" height="2" fill="#ffff80"/>
<rect x="649" y="588" width="1" height="4" fill="#ffff80"/>
<rect x="650" y="589" width="1" height="3" fill="#ffff80"/>
<rect x="652" y="591" width="1" height="1" fill="#ffff80"/>
<rect x="653" y="588" width="1" height="4" fill="#ffff80"/>
<rect x="654" y="589" width="1" height="3" fill="#ffff80"/>
<rect x="655" y="583" width="1" height="9" fill="#ffff80"/>
<rect x="656" y="589" width="1" height="3" fill="#ffff80"/>
<rect x="657" y="588" width="1" height="4" fill="#ffff80"/>
<rect x="658" y="588" width="1" height="4" fill="#ffff80"/>
<rect x="659" y="591" width="1" height="1" fill="#ffff80"/>
<rect x="660" y="591" width="1" height="1" fill="#ffff80"/>
<rect x="662" y="590" width="1" height="2" fill="#ffff80"/>
<rect x="663" y="589" width="1" height="3" fill="#ffff80"/>
<rect x="667" y="589" width="1" height="3" fill="#ffff80"/>
<rect x="668" y="589" width="1" height="3" fill="#ffff80"/>
<rect x="669" y="589" width="1" height="3" fill="#ffff80"/>
<rect x="670" y="590" width="1" height="2" fill="#ffff80"/>
<rect x="672" y="591" width="1" height="1" fill="#ffff80"/>
<rect x="673" y="589" width="1" height="3" fill="#ffff80"/>
<rect x="676" y="590" width="1" height="2" fill="#ffff80"/>
<rect x="679" y="589" width="1" height="3" fill="#ffff80"/>
<rect x="681" y="590" width="1" height="2" fill="#ffff80"/>
<rect x="687" y="591" width="1" height="1" fill="#ffff80"/>
<rect x="688" y="591" width="1" height="1" fill="#ffff80"/>
<rect x="689" y="590" width="1" height="2" fill="#ffff80"/>
<rect x="692" y="590" width="1" height="2" fill="#ffff80"/>
<rect x="693" y="591" width="1" height="1" fill="#ffff80"/>
<rect x="694" y="590" width="1" height="2" fill="#ffff80"/>
<rect x="697" y="591" width="1" height="1" fill="#ffff80"/>
<rect x="698" y="590" width="1" height="2" fill="#ffff80"/>
<rect x="700" y="591" width="1" height="1" fill="#ffff80"/>
<rect x="702" y="589" width="1" height="3" fill="#ffff80"/>
<rect x="703" y="591" width="1" height="1" fill="#ffff80"/>
<rect x="710" y="589" width="1" height="3" fill="#ffff80"/>
<rect x="713" y="590" width="1" height="2" fill="#ffff80"/>
<rect x="714" y="589" width="1" height="3" fill="#ffff80"/>
<rect x="720" y="591" width="1" height="1" fill="#ffff80"/>
<rect x="721" y="590" width="1" height="2" fill="#ffff80"/>
<rect x="723" y="589" width="1" height="3" fill="#ffff80"/>
<rect x="724" y="589" width="1" height="3" fill="#ffff80"/>
<rect x="727" y="590" width="1" height="2" fill="#ffff80"/>
<rect x="728" y="589" width="1" height="3" fill="#ffff80"/>
<rect x="729" y="589" width="1" height="3" fill="#ffff80"/>
<rect x="730" y="589" width="1" height="3" fill="#ffff80"/>
<rect x="732" y="590" width="1" height="2" fill="#ffff80"/>
<rect x="733" y="589" width="1" height="3" fill="#ffff80"/>
<rect x="734" y="590" width="1" height="2" fill="#ffff80"/>
<rect x="735" y="591" width="1" height="1" fill="#ffff80"/>
<rect x="736" y="591" width="1" height="1" fill="#ffff80"/>
<rect x="737" y="591" width="1" height="1" fill="#ffff80"/>
<rect x="738" y="591" width="1" height="1" fill="#ffff80"/>
<rect x="740" y="582" width="1" height="10" fill="#ffff80"/>
<rect x="741" y="589" width="1" height="3" fill="#ffff80"/>
<rect x="742" y="591" width="1" height="1" fill="#ffff80"/>
<rect x="747" y="590" width="1" height="2" fill="#ffff80"/>
<rect x="751" y="589" width="1" height="3" fill="#ffff80"/>
<rect x="755" y="589" width="1" height="3" fill="#ffff80"/>
<rect x="757" y="590" width="1" height="2" fill="#ffff80"/>
<rect x="760" y="589" width="1" height="3" fill="#ffff80"/>
<rect x="763" y="569" width="1" height="23" fill="#ffff80"/>
<rect x="764" y="574" width="1" height="18" fill="#ffff80"/>
<rect x="765" y="580" width="1" height="12" fill="#ffff80"/>
<line x1="565" y1="568.5" x2="767" y2="568.5" stroke="#00ff00" stroke-width="1"/>
</g>
<path d="M738 479.5h2M627 498.5h2M633 498.5h3M654 503.5h3M669 493.5h2M599 470.5h2M572 466.5h2M591 466.5h2M692 488.5h3M667 494.5h2M587 461.5h3M576 465.5h2M611 483.5h4M703 483.5h3M719 483.5h3M596 472.5h3M712 481.5h3M725 481.5h3M733 481.5h3M761 481.5h2M601 473.5h2M676 485.5h5M741 485.5h3M574 464.5h2M578 464.5h2M603 474.5h5M688 492.5h2M639 502.5h2M652 502.5h2M657 502.5h4M710 482.5h2M715 482.5h4M722 482.5h3M731 482.5h2M744 482.5h2M623 499.5h2M581 471.5h3M599 471.5h2M698 486.5h2M748 486.5h2M695 487.5h3M728 480.5h2M760 480.5h3M690 489.5h2M641 501.5h2M688 491.5h2M631 497.5h2M662 495.5h2M643 500.5h2M646 500.5h2M609.5 478v2M759.5 479v1M762.5 479v1M762.5 482v4M618.5 497v2M620.5 497v2M625.5 498v1M630.5 498v1M637.5 498v2M661.5 496v4M765.5 498v3M580.5 466v4M585.5 468v2M594.5 469v1M600.5 469v1M649.5 502v2M651.5 503v1M616.5 490v4M662.5 493v2M689.5 493v1M763.5 486v8M581.5 470v1M581.5 472v1M584.5 470v1M595.5 470v2M568.5 452v5M576.5 466v1M586.5 464v4M615.5 486v4M673.5 488v1M686.5 487v2M700.5 488v2M751.5 488v1M617.5 494v3M764.5 494v4M570.5 461v3M571.5 464v2M573.5 465v1M579.5 463v1M579.5 465v1M590.5 462v4M740.5 480v4M744.5 483v1M746.5 483v2M756.5 483v1M601.5 472v1M610.5 480v2M707.5 481v1M709.5 481v1M730.5 481v1M737.5 480v2M745.5 481v1M757.5 481v2M650.5 504v1M587.5 462v2M598.5 473v1M614.5 484v2M682.5 485v1M702.5 484v2M747.5 485v1M754.5 485v1M671.5 491v2M611.5 482v1M706.5 482v1M736.5 482v1M621.5 499v1M629.5 499v1M645.5 499v1M619.5 496v1M663.5 496v1M665.5 496v1M675.5 486v1M683.5 486v1M685.5 486v1M701.5 486v2M753.5 486v1M567.5 445v7M674.5 487v1M684.5 487v1M699.5 487v1M750.5 487v1M752.5 487v1M708.5 480v1M735.5 480v1M758.5 480v1M593.5 467v2M672.5 489v2M687.5 489v2M690.5 490v1M572.5 467v1M591.5 467v1M569.5 457v4M589.5 460v1M638.5 500v2M648.5 501v1M660.5 500v2M566.5 429v16M681.5 484v1M741.5 484v1M743.5 484v1M755.5 484v1M607.5 475v1M739.5 478v1M626.5 497v1M636.5 497v1M664.5 497v1M666.5 495v1M622.5 500v1M575.5 463v1M608.5 476v2" fill="none" stroke="#fff" stroke-width="1" shape-rendering="crispEdges"/>
<polygon points="512.5,58 520,47.5 520,68" fill="#fff"/>
<polygon points="772.5,58 764.5,46.5 764.5,69.5" fill="#fff"/>
</svg>
<div id="tb"><div id="strip"><b></b><i style="left:113px"></i><i style="left:233px"></i><i style="left:353px"></i><i style="left:473px"></i><i style="left:593px"></i></div>

<svg width="773" height="42" viewBox="0 0 773 42" style="position:absolute;left:0;top:0">
<defs>
<linearGradient id="gG" x1="0" x2="1"><stop offset="0" stop-color="#7ed321"/><stop offset="1" stop-color="#3f9a10"/></linearGradient>
<linearGradient id="gO" x1="0" x2="1"><stop offset="0" stop-color="#ffc04a"/><stop offset="1" stop-color="#f08a10"/></linearGradient>
<linearGradient id="gB" x1="0" x2="1"><stop offset="0" stop-color="#4aa8ff"/><stop offset="1" stop-color="#0a63d0"/></linearGradient>
<linearGradient id="gT" x1="0" y1="0" x2="0" y2="1"><stop offset="0" stop-color="#7ff5ea"/><stop offset="1" stop-color="#20c8c0"/></linearGradient>
</defs>
<rect x="4" y="23.5" width="4" height="7.5" rx="1" fill="url(#gG)"/>
<rect x="8.5" y="20" width="4.3" height="11" rx="1" fill="url(#gO)"/>
<rect x="13.5" y="15" width="4.7" height="16" rx="1" fill="url(#gB)"/>
<path d="M37.7 15 V30.4 H55" fill="none" stroke="#ff1010" stroke-width="1.6"/>
<path d="M38.5 28.5 L42 22 L44 25 L47.5 19 L49.5 21.5 L53.5 16" fill="none" stroke="#ff1010" stroke-width="1.4"/>
<path d="M37.8 30.2 l0 -4 M37.8 30.2 l4 0" stroke="#ff1010" stroke-width="1"/>
<rect x="67.5" y="10.5" width="28" height="27" fill="none" stroke="#d8d8d8" stroke-width="1"/>
<g fill="url(#gT)" stroke="none">
<rect x="72" y="23.9" width="18" height="1.2" opacity="0.75"/>
<rect x="75.1" y="17" width="1.5" height="13.8"/><rect x="73.9" y="18.3" width="3.9" height="9.6" rx="1.3"/>
<rect x="80.1" y="15" width="1.5" height="13.5"/><rect x="78.9" y="16.3" width="3.9" height="9.6" rx="1.3"/>
<rect x="85.4" y="17" width="1.5" height="13.8"/><rect x="84.2" y="18.3" width="3.9" height="9.6" rx="1.3"/>
</g>
<rect x="108.3" y="16.6" width="14.6" height="14" fill="#f3f3f1" stroke="#b08848" stroke-width="0.7"/>
<rect x="108.3" y="16.6" width="14.6" height="3.2" fill="#2a80e0"/>
<g fill="#e8eef8"><rect x="109.9" y="15.6" width="1.1" height="3"/><rect x="114.9" y="15.6" width="1.1" height="3"/><rect x="120" y="15.6" width="1.1" height="3"/></g>
<circle cx="112.5" cy="25.5" r="1.1" fill="#e83820"/><circle cx="115.3" cy="22.6" r="1.1" fill="#e83820"/><circle cx="118.2" cy="23.6" r="1.2" fill="#30b030"/>
<g fill="#d8dce4"><rect x="110.3" y="22" width="1.6" height="1.4"/><rect x="117.6" y="26.4" width="1.6" height="1.4"/><rect x="114.4" y="26.4" width="1.6" height="1.4"/><rect x="120" y="21.6" width="1.4" height="1.4"/></g>
<path d="M119.5 30.6 L122.9 27.4 L122.9 30.6 Z" fill="#d0d0d0"/>
<line x1="314.5" y1="16" x2="314.5" y2="35" stroke="#3a3a3a" stroke-width="1"/>
<!-- edit note icon -->
<rect x="644.5" y="16" width="13" height="13.5" fill="#eef3fb" stroke="#5a8ae0" stroke-width="1"/>
<rect x="646" y="18" width="10" height="2" fill="#f09040"/>
<g fill="#b4ccf0"><rect x="646.5" y="21.5" width="2.2" height="2"/><rect x="649.7" y="21.5" width="2.2" height="2"/><rect x="652.9" y="21.5" width="2.2" height="2"/><rect x="646.5" y="24.5" width="2.2" height="2"/><rect x="649.7" y="24.5" width="2.2" height="2"/></g>
<path d="M648.3 29.6 L657.6 20.8" stroke="#8a6020" stroke-width="4" stroke-linecap="round"/>
<path d="M648.6 29.3 L657.3 21.1" stroke="#ecc868" stroke-width="2.6" stroke-linecap="round"/>
<!-- zoom in -->
<polygon points="681.5,15.8 686.3,15.8 689.7,19.2 689.7,24 686.3,27.4 681.5,27.4 678.1,24 678.1,19.2" fill="none" stroke="#c89858" stroke-width="1.1"/>
<path d="M690.2 27.4 L692.2 29.2" stroke="#d8a868" stroke-width="3.6" stroke-linecap="round"/>
<path d="M686 21.4 v5.8 M683.1 24.3 h5.8" stroke="#2fa040" stroke-width="2.2"/>
<!-- zoom out -->
<polygon points="716.5,15.8 721.3,15.8 724.7,19.2 724.7,24 721.3,27.4 716.5,27.4 713.1,24 713.1,19.2" fill="none" stroke="#c89858" stroke-width="1.1"/>
<path d="M725.2 27.4 L727.2 29.2" stroke="#d8a868" stroke-width="3.6" stroke-linecap="round"/>
<path d="M717.9 24.3 h7" stroke="#e02828" stroke-width="2.6"/>
<path d="M718.8 24.3 h5.2" stroke="#ff9090" stroke-width="0.8"/>
<!-- pencil on paper -->
<rect x="741.5" y="16" width="14.5" height="14" fill="#ececec" stroke="#fafafa" stroke-width="1"/>
<path d="M744.6 26.6 L755 16.9" stroke="#c07818" stroke-width="3.4"/>
<path d="M744.8 26.4 L754.6 17.3" stroke="#f6b838" stroke-width="2"/>
<path d="M743.2 28.6 L744 25.6 L746.3 27.6 Z" fill="#e8d0a0" stroke="#705020" stroke-width="0.4"/>
<path d="M754.4 16 L756.4 14.6 L757.6 16 L756 17.8 Z" fill="#f070c0"/>
</svg>

<div class="btn bl" style="left:143px">日</div>
<div class="btn bl" style="left:178px">周</div>
<div class="btn bl" style="left:213px">月</div>
<div class="btn bl" style="left:248px">季</div>
<div class="btn bl bx" style="left:283px">X</div>
<div class="btn or" style="left:328px">1</div>
<div class="btn or" style="left:363px">3</div>
<div class="btn or" style="left:398px">5</div>
<div class="btn or" style="left:433px">15</div>
<div class="btn or" style="left:468px">30</div>
<div class="btn or" style="left:503px">60</div>
<div class="btn or sm" style="left:538px">2hr</div>
<div class="btn or sm" style="left:573px">4hr</div>
<div class="btn or" style="left:608px">Y</div>
</div>
<div class="t ax" style="right:723.5px;top:95.0px;"><i style="width:6px">2</i><i style="width:6px">0</i><i style="width:6px">0</i><i style="width:6px">.</i><i style="width:6px">0</i><i style="width:6px">0</i></div>
<div class="t ax" style="right:723.5px;top:132.0px;"><i style="width:6px">1</i><i style="width:6px">9</i><i style="width:6px">0</i><i style="width:6px">.</i><i style="width:6px">0</i><i style="width:6px">0</i></div>
<div class="t ax" style="right:723.5px;top:168.0px;"><i style="width:6px">1</i><i style="width:6px">8</i><i style="width:6px">0</i><i style="width:6px">.</i><i style="width:6px">0</i><i style="width:6px">0</i></div>
<div class="t ax" style="right:723.5px;top:205.0px;"><i style="width:6px">1</i><i style="width:6px">7</i><i style="width:6px">0</i><i style="width:6px">.</i><i style="width:6px">0</i><i style="width:6px">0</i></div>
<div class="t ax" style="right:723.5px;top:241.0px;"><i style="width:6px">1</i><i style="width:6px">6</i><i style="width:6px">0</i><i style="width:6px">.</i><i style="width:6px">0</i><i style="width:6px">0</i></div>
<div class="t ax" style="right:723.5px;top:277.0px;"><i style="width:6px">1</i><i style="width:6px">5</i><i style="width:6px">0</i><i style="width:6px">.</i><i style="width:6px">0</i><i style="width:6px">0</i></div>
<div class="t ax" style="right:723.5px;top:314.0px;"><i style="width:6px">1</i><i style="width:6px">4</i><i style="width:6px">0</i><i style="width:6px">.</i><i style="width:6px">0</i><i style="width:6px">0</i></div>
<div class="t ax" style="right:723.5px;top:363.0px;"><i style="width:6px">1</i><i style="width:6px">0</i><i style="width:6px">0</i><i style="width:6px">0</i><i style="width:6px">0</i><i style="width:6px">0</i><i style="width:6px">0</i><i style="width:6px">0</i></div>
<div class="t ax" style="right:723.5px;top:413.0px;"><i style="width:6px">5</i><i style="width:6px">0</i><i style="width:6px">0</i><i style="width:6px">0</i><i style="width:6px">0</i><i style="width:6px">0</i><i style="width:6px">0</i></div>
<div class="t ax" style="right:723.5px;top:463.0px;"><i style="width:6px">0</i></div>
<div class="t ax" style="right:723.5px;top:496.0px;"><i style="width:6px">0</i><i style="width:6px">.</i><i style="width:6px">0</i><i style="width:6px">0</i></div>
<div class="t ax" style="right:723.5px;top:553.0px;"><i style="width:6px;transform:scaleX(1.5)">-</i><i style="width:6px">5</i><i style="width:6px">0</i><i style="width:6px">.</i><i style="width:6px">0</i><i style="width:6px">0</i></div>
<div class="t cn" style="left:27px;top:43px;color:#c8c8c8">周线</div>
<div class="t bold" style="left:449.5px;top:56px;"><i style="width:7.6px">2</i><i style="width:7.6px">1</i><i style="width:7.6px">2</i><i style="width:7.6px">.</i><i style="width:7.6px">5</i><i style="width:7.6px">5</i></div>
<div class="t bold" style="left:353.5px;top:317px;"><i style="width:7.6px">1</i><i style="width:7.6px">3</i><i style="width:7.6px">8</i><i style="width:7.6px">.</i><i style="width:7.6px">1</i><i style="width:7.6px">6</i></div>
<div class="t date" style="left:66px;top:611px;"><i style="width:7px">2</i><i style="width:7px">0</i><i style="width:7px">2</i><i style="width:7px">2</i><i style="width:7px;transform:scaleX(1.5)">-</i><i style="width:7px">0</i><i style="width:7px">9</i><i style="width:7px;transform:scaleX(1.5)">-</i><i style="width:7px">0</i><i style="width:7px">9</i></div>
<div class="t date" style="left:142px;top:611px;"><i style="width:7px">2</i><i style="width:7px">0</i><i style="width:7px">2</i><i style="width:7px">2</i><i style="width:7px;transform:scaleX(1.5)">-</i><i style="width:7px">1</i><i style="width:7px">0</i><i style="width:7px;transform:scaleX(1.5)">-</i><i style="width:7px">2</i><i style="width:7px">9</i></div>
<div class="t date" style="left:254px;top:611px;"><i style="width:7px">2</i><i style="width:7px">0</i><i style="width:7px">2</i><i style="width:7px">2</i><i style="width:7px;transform:scaleX(1.5)">-</i><i style="width:7px">1</i><i style="width:7px">2</i><i style="width:7px;transform:scaleX(1.5)">-</i><i style="width:7px">1</i><i style="width:7px">7</i></div>
<div class="t date" style="left:425px;top:611px;"><i style="width:7px">2</i><i style="width:7px">0</i><i style="width:7px">2</i><i style="width:7px">3</i><i style="width:7px;transform:scaleX(1.5)">-</i><i style="width:7px">0</i><i style="width:7px">3</i><i style="width:7px;transform:scaleX(1.5)">-</i><i style="width:7px">2</i><i style="width:7px">4</i></div>
<div class="t title" style="left:527px;top:40.3px;">綜合指數</div>
<div class="t code" style="left:662.5px;top:42.8px;">100001</div>
<div class="t pcn cy" style="left:516px;top:74px;">委比</div>
<div class="t pcn cy" style="left:516px;top:92px;">卖③</div>
<div class="t pcn cy" style="left:516px;top:108px;">卖②</div>
<div class="t pcn cy" style="left:516px;top:123.5px;">卖①</div>
<div class="t pcn cy" style="left:516px;top:142px;">买①</div>
<div class="t pcn cy" style="left:516px;top:158px;">买②</div>
<div class="t pcn cy" style="left:516px;top:174px;">买③</div>
<div class="t pcn cy" style="left:516px;top:192px;">最新</div>
<div class="t pcn cy" style="left:516px;top:208px;">张跌</div>
<div class="t pcn cy" style="left:516px;top:224px;">幅度</div>
<div class="t pcn cy" style="left:516px;top:240px;">现量</div>
<div class="t pcn cy" style="left:516px;top:256px;">总量</div>
<div class="t pcn cy" style="left:516px;top:272px;">成交额</div>
<div class="t pcn cy" style="left:516px;top:288px;">昨收</div>
<div class="t pcn cy" style="left:516px;top:304px;">市值</div>
<div class="t pcn cy" style="left:516px;top:322px;">外盘</div>
<div class="t pcn cy" style="left:646px;top:74px;">委差</div>
<div class="t pcn cy" style="left:646px;top:192px;">均价</div>
<div class="t pcn cy" style="left:646px;top:208px;">开盘价</div>
<div class="t pcn cy" style="left:646px;top:224px;">最高价</div>
<div class="t pcn cy" style="left:646px;top:240px;">最低价</div>
<div class="t pcn cy" style="left:646px;top:256px;">量比</div>
<div class="t pcn cy" style="left:646px;top:272px;">换手率</div>
<div class="t pcn cy" style="left:646px;top:322px;">内盘</div>
<div class="t pn" style="right:133px;top:74.3px;color:#fff"><i style="width:6.67px">0</i></div>
<div class="t pn" style="right:133px;top:92.3px;color:#fff"><i style="width:6.67px">0</i></div>
<div class="t pn" style="right:133px;top:108.3px;color:#fff"><i style="width:6.67px">0</i></div>
<div class="t pn" style="right:133px;top:123.8px;color:#fff"><i style="width:6.67px">0</i></div>
<div class="t pn" style="right:133px;top:142.3px;color:#fff"><i style="width:6.67px">0</i></div>
<div class="t pn" style="right:133px;top:158.3px;color:#fff"><i style="width:6.67px">0</i></div>
<div class="t pn" style="right:133px;top:174.3px;color:#fff"><i style="width:6.67px">0</i></div>
<div class="t pn" style="right:133px;top:192.3px;color:#00e000"><i style="width:6.67px">1</i><i style="width:6.67px">7</i><i style="width:6.67px">2</i><i style="width:6.67px">.</i><i style="width:6.67px">8</i><i style="width:6.67px">1</i></div>
<div class="t pn" style="right:133px;top:208.3px;color:#00e000"><i style="width:6.67px;transform:scaleX(1.5)">-</i><i style="width:6.67px">6</i><i style="width:6.67px">.</i><i style="width:6.67px">5</i><i style="width:6.67px">6</i></div>
<div class="t pn" style="right:133px;top:224.3px;color:#00e000"><i style="width:6.67px;transform:scaleX(1.5)">-</i><i style="width:6.67px">3</i><i style="width:6.67px">.</i><i style="width:6.67px">6</i><i style="width:6.67px">6</i><i style="width:6.67px;font-size:8.5px;letter-spacing:-1.5px;vertical-align:0.5px">%</i></div>
<div class="t pn" style="right:133px;top:240.3px;color:#ffff80"><i style="width:6.67px">0</i></div>
<div class="t pn" style="right:133px;top:256.3px;color:#ffff80"><i style="width:6.67px">5</i><i style="width:6.67px">9</i><i style="width:6.67px">2</i><i style="width:6.67px">8</i><i style="width:6.67px">6</i><i style="width:6.67px">6</i></div>
<div class="t pn" style="right:133px;top:272.3px;color:#ffff80"><i style="width:6.67px">0</i><i style="width:6.67px">.</i><i style="width:6.67px">3</i><i style="width:6.67px">2</i><i style="width:13.34px">亿</i></div>
<div class="t pn" style="right:133px;top:288.3px;color:#c8c8c8"><i style="width:6.67px">1</i><i style="width:6.67px">7</i><i style="width:6.67px">9</i><i style="width:6.67px">.</i><i style="width:6.67px">3</i><i style="width:6.67px">7</i></div>
<div class="t pn" style="right:133px;top:304.3px;color:#fff"><i style="width:6.67px">0</i></div>
<div class="t pn" style="right:133px;top:322.3px;color:#ffff00"><i style="width:6.67px">0</i></div>
<div class="t pn" style="right:2.5px;top:74.3px;color:#fff"><i style="width:6.67px">0</i></div>
<div class="t pn" style="right:2.5px;top:92.3px;color:#ffff00"><i style="width:6.67px">0</i></div>
<div class="t pn" style="right:2.5px;top:108.3px;color:#ffff00"><i style="width:6.67px">0</i></div>
<div class="t pn" style="right:2.5px;top:123.8px;color:#ffff00"><i style="width:6.67px">0</i></div>
<div class="t pn" style="right:2.5px;top:142.3px;color:#ffff00"><i style="width:6.67px">0</i></div>
<div class="t pn" style="right:2.5px;top:158.3px;color:#ffff00"><i style="width:6.67px">0</i></div>
<div class="t pn" style="right:2.5px;top:174.3px;color:#ffff00"><i style="width:6.67px">0</i></div>
<div class="t pn" style="right:2.5px;top:192.3px;color:#fff"><i style="width:6.67px">0</i></div>
<div class="t pn" style="right:2.5px;top:208.3px;color:#fff"><i style="width:6.67px">1</i><i style="width:6.67px">7</i><i style="width:6.67px">9</i><i style="width:6.67px">.</i><i style="width:6.67px">3</i><i style="width:6.67px">7</i></div>
<div class="t pn" style="right:2.5px;top:224.3px;color:#ff3030"><i style="width:6.67px">1</i><i style="width:6.67px">7</i><i style="width:6.67px">9</i><i style="width:6.67px">.</i><i style="width:6.67px">5</i><i style="width:6.67px">8</i></div>
<div class="t pn" style="right:2.5px;top:240.3px;color:#00e000"><i style="width:6.67px">1</i><i style="width:6.67px">7</i><i style="width:6.67px">2</i><i style="width:6.67px">.</i><i style="width:6.67px">2</i><i style="width:6.67px">8</i></div>
<div class="t pn" style="right:2.5px;top:256.3px;color:#ffff80"><i style="width:6.67px">0</i><i style="width:6.67px">.</i><i style="width:6.67px">6</i><i style="width:6.67px">4</i></div>
<div class="t pn" style="right:2.5px;top:272.3px;color:#fff"><i style="width:6.67px">0</i></div>
<div class="t pn" style="right:2.5px;top:322.3px;color:#ffff00"><i style="width:6.67px">0</i></div>
<div class="t num" style="right:212px;top:344.5px;color:#ff4040"><i style="width:6px">1</i><i style="width:6px">8</i><i style="width:6px">6</i><i style="width:6px">.</i><i style="width:6px">4</i><i style="width:6px">8</i></div>
<div class="t num" style="right:212px;top:369.5px;color:#ff4040"><i style="width:6px">1</i><i style="width:6px">8</i><i style="width:6px">4</i><i style="width:6px">.</i><i style="width:6px">1</i><i style="width:6px">1</i></div>
<div class="t num" style="right:212px;top:394.5px;color:#ff4040"><i style="width:6px">1</i><i style="width:6px">8</i><i style="width:6px">1</i><i style="width:6px">.</i><i style="width:6px">7</i><i style="width:6px">4</i></div>
<div class="t num" style="right:212px;top:419.5px;color:#fff"><i style="width:6px">1</i><i style="width:6px">7</i><i style="width:6px">9</i><i style="width:6px">.</i><i style="width:6px">3</i><i style="width:6px">7</i></div>
<div class="t num" style="right:212px;top:444.5px;color:#00ff00"><i style="width:6px">1</i><i style="width:6px">7</i><i style="width:6px">7</i><i style="width:6px">.</i><i style="width:6px">0</i><i style="width:6px">0</i></div>
<div class="t num" style="right:212px;top:469.5px;color:#00ff00"><i style="width:6px">1</i><i style="width:6px">7</i><i style="width:6px">4</i><i style="width:6px">.</i><i style="width:6px">6</i><i style="width:6px">3</i></div>
<div class="t num" style="right:212px;top:495.5px;color:#00ff00"><i style="width:6px">1</i><i style="width:6px">7</i><i style="width:6px">2</i><i style="width:6px">.</i><i style="width:6px">2</i><i style="width:6px">6</i></div>
<div class="t ser" style="right:211px;top:509.5px;">47404</div>
<div class="t ser" style="right:211px;top:533.5px;">31603</div>
<div class="t ser" style="right:211px;top:557.5px;">15802</div>
<div id="tabs"><div style="left:-1px;width:42px;background:linear-gradient(#3a3a3a,#2a2a2a)">细</div><div style="left:41px;width:41px;background:linear-gradient(#3a3a3a,#2a2a2a);border-left:1px solid #0c0c0c">盘</div><div style="left:82px;width:43px;background:radial-gradient(ellipse 26px 26px at 50% 100%,#d00000,#7a0000 40%,#200000 80%,#000 100%)">图</div><span style="position:absolute;left:41px;right:0;bottom:0;height:1px;background:#b00000"></span></div>
</div></body></html>
